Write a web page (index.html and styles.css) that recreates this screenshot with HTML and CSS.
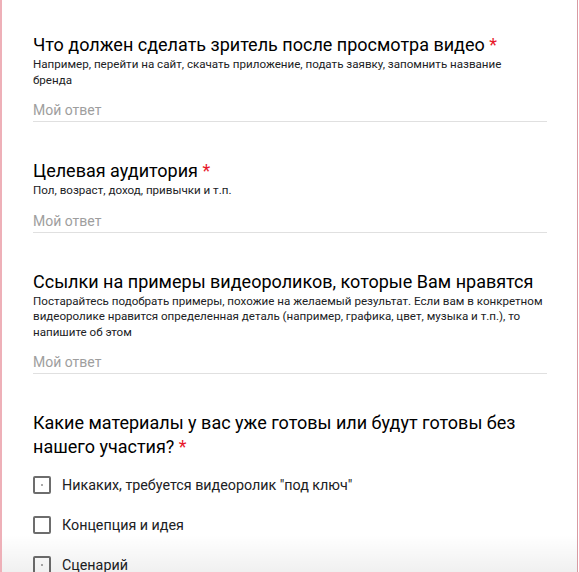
FILE: index.html
```html
<!DOCTYPE html>
<html lang="ru">
<head>
<meta charset="utf-8">
<title>Форма</title>
<link rel="stylesheet" href="styles.css">
</head>
<body>
<div class="card">
  <div class="question">
    <div class="title">Что должен сделать зритель после просмотра видео <span class="req">*</span></div>
    <div class="desc">Например, перейти на сайт, скачать приложение, подать заявку, запомнить название<br>бренда</div>
    <div class="answer">Мой ответ</div>
  </div>
  <div class="question">
    <div class="title">Целевая аудитория <span class="req">*</span></div>
    <div class="desc">Пол, возраст, доход, привычки и т.п.</div>
    <div class="answer">Мой ответ</div>
  </div>
  <div class="question">
    <div class="title">Ссылки на примеры видеороликов, которые Вам нравятся</div>
    <div class="desc">Постарайтесь подобрать примеры, похожие на желаемый результат. Если вам в конкретном видеоролике нравится определенная деталь (например, графика, цвет, музыка и т.п.), то напишите об этом</div>
    <div class="answer">Мой ответ</div>
  </div>
  <div class="question">
    <div class="title">Какие материалы у вас уже готовы или будут готовы без нашего участия? <span class="req">*</span></div>
    <div class="options">
      <label class="option"><span class="box dot"></span><span>Никаких, требуется видеоролик "под ключ"</span></label>
      <label class="option"><span class="box"></span><span>Концепция и идея</span></label>
      <label class="option"><span class="box dot"></span><span>Сценарий</span></label>
    </div>
  </div>
  <div class="fade"></div>
</div>
</body>
</html>
```

FILE: styles.css
```css
html, body {
  margin: 0;
  padding: 0;
  background: #ffffff;
  height: 100%;
  overflow: hidden;
}
body {
  font-family: Roboto, "Noto Sans", Arial, sans-serif;
  color: #202124;
}
.card {
  position: relative;
  box-sizing: border-box;
  width: 578px;
  min-height: 100%;
  border-left: 2px solid #eeb0b8;
  border-right: 1px solid #d99aa2;
  padding: 33px 31px 0 31px;
  background: #fff;
}
.question {
  width: 514px;
  margin-bottom: 37px;
}
.title {
  font-size: 18px;
  line-height: 24px;
  color: #000;
}
.req {
  display: inline-block;
  color: #e8182b;
  font-size: 18px;
  line-height: 20px;
}
.desc {
  font-size: 11.6px;
  line-height: 15.5px;
  color: #202124;
}
.answer {
  margin-top: 12px;
  font-size: 14px;
  line-height: 20px;
  color: #9e9e9e;
  padding-bottom: 1px;
  border-bottom: 1px solid #e0e0e0;
}
.options {
  display: flex;
  flex-direction: column;
  gap: 22px;
  margin-top: 17px;
}
.option {
  display: flex;
  align-items: center;
  gap: 11px;
  font-size: 14.3px;
  line-height: 18px;
  color: #202124;
}
.box {
  position: relative;
  box-sizing: border-box;
  width: 18px;
  height: 18px;
  border: 2px solid #6d6d6d;
  border-radius: 2px;
  flex: none;
}
.dot::after {
  content: "";
  position: absolute;
  left: 6px;
  top: 6px;
  width: 2px;
  height: 2px;
  background: #aaa;
}
.fade {
  position: absolute;
  left: 0;
  right: 0;
  top: 535px;
  height: 37px;
  background: linear-gradient(to bottom, rgba(0,0,0,0), rgba(0,0,0,0.06));
  pointer-events: none;
}
```
